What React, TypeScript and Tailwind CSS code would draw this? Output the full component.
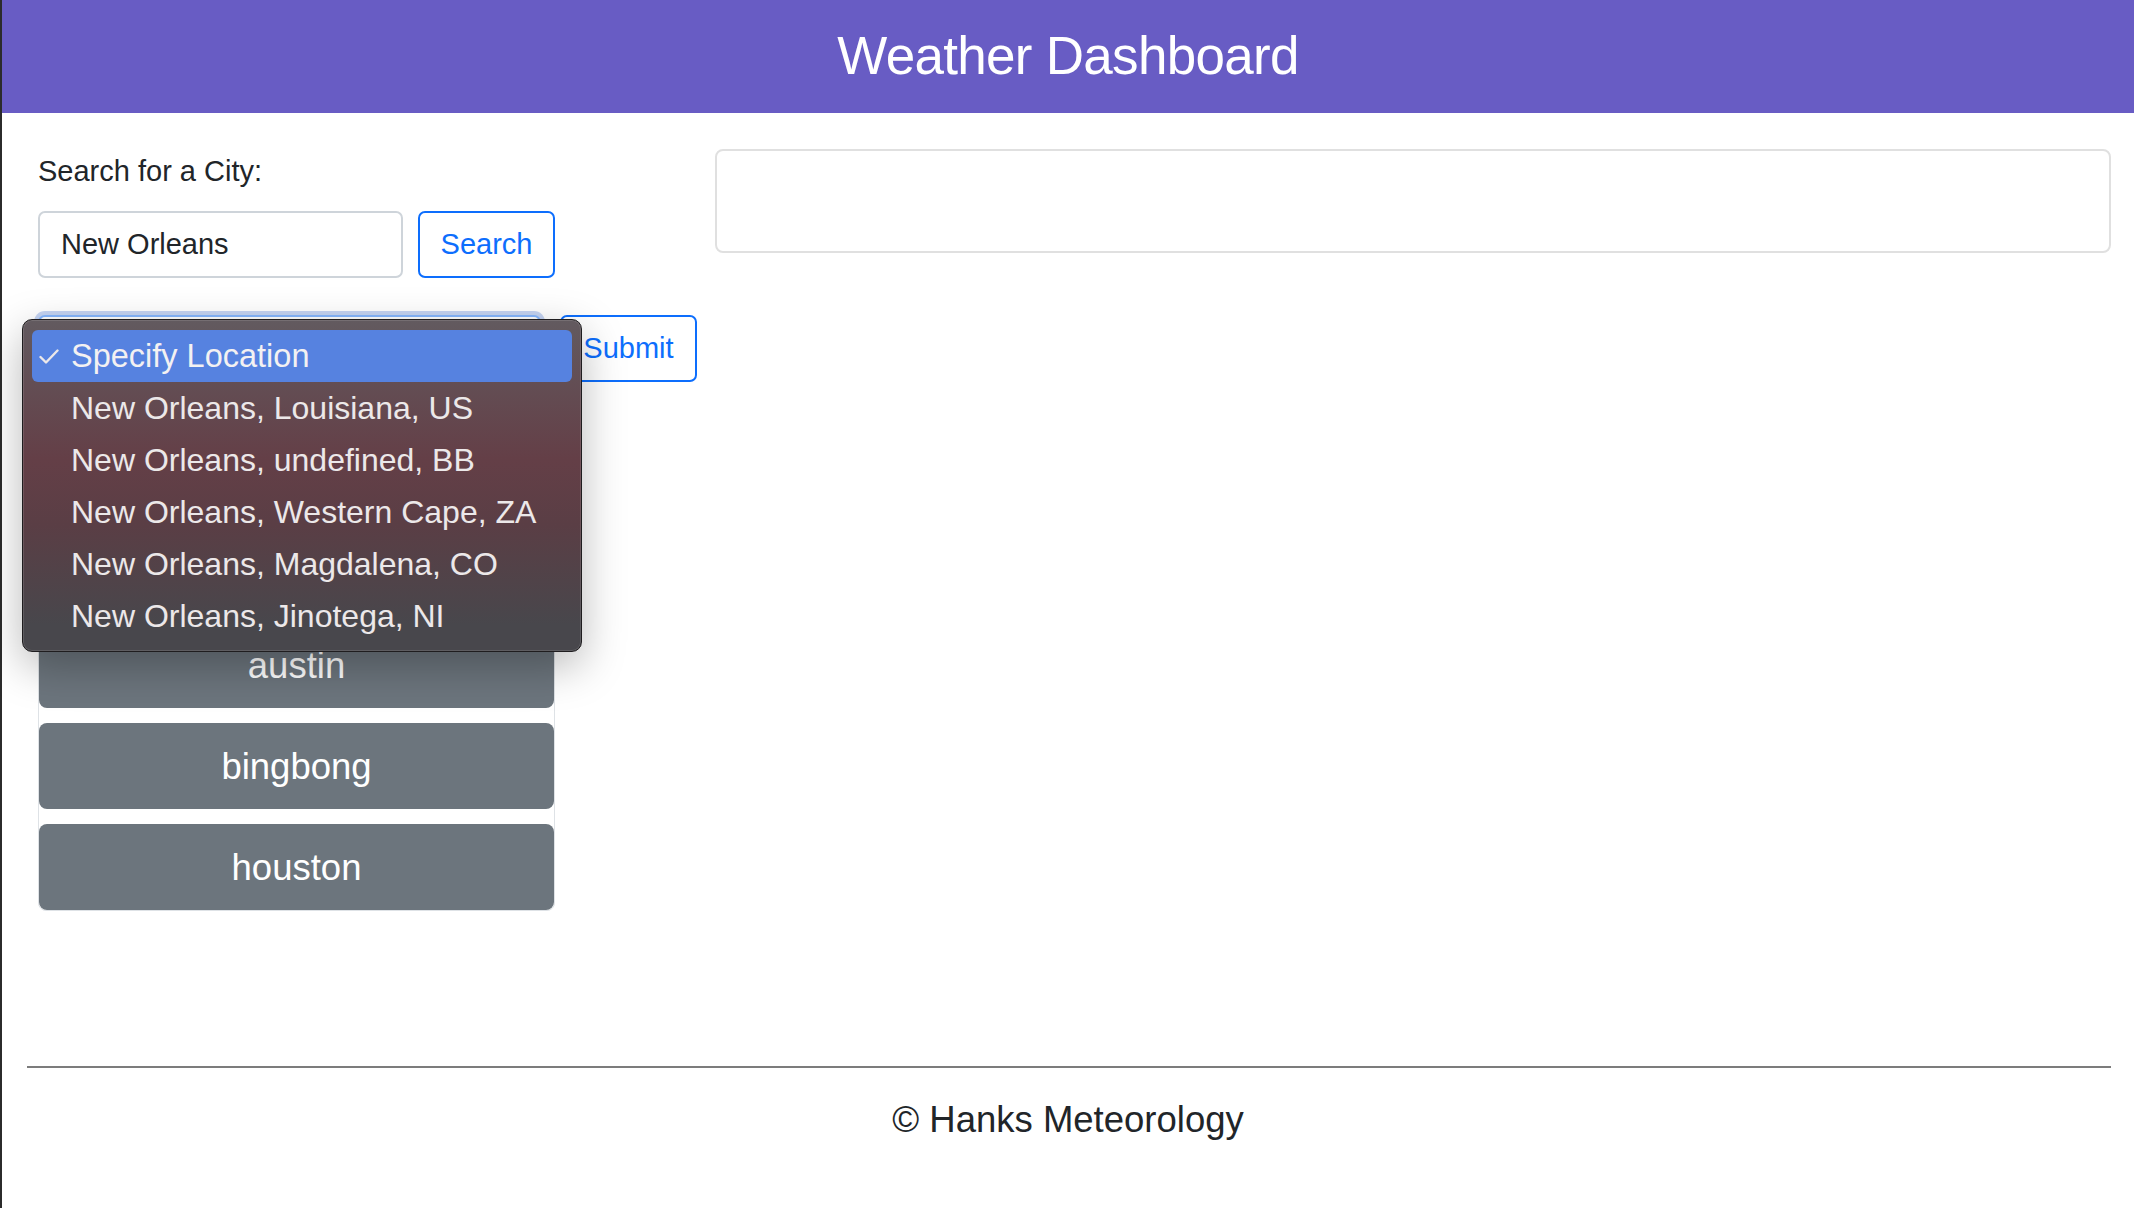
import React from 'react';

const locations = [
  'New Orleans, Louisiana, US',
  'New Orleans, undefined, BB',
  'New Orleans, Western Cape, ZA',
  'New Orleans, Magdalena, CO',
  'New Orleans, Jinotega, NI',
];

const savedCities = ['austin', 'bingbong', 'houston'];

const CheckMark: React.FC = () => (
  <svg width="20" height="15" viewBox="0 0 20 15" fill="none">
    <polyline points="1.5,8 7,13.5 18.5,1.5" stroke="#ece8e9" strokeWidth="2.4" strokeLinecap="round" strokeLinejoin="round" />
  </svg>
);

const LocationMenu: React.FC = () => (
  <div className="absolute left-[-16px] top-[4px] z-10 w-[560px] h-[333px] rounded-[10px] border border-[#1f1d1f] bg-[linear-gradient(180deg,#625a5f_0%,#643f47_42%,#5a3e45_62%,#48474c_92%)] px-[9px] pt-[10px] shadow-[0_14px_44px_rgba(0,0,0,0.28),inset_0_0_0_1px_rgba(255,255,255,0.12)]">
    <div className="flex items-center h-[52px] rounded-[6px] bg-[#5682e0] text-[32.5px] leading-[52px] text-[#f3f1f2]">
      <span className="w-[39px] pl-[7px] flex items-center">
        <CheckMark />
      </span>
      Specify Location
    </div>
    {locations.map((loc) => (
      <div key={loc} className="h-[52px] pl-[39px] text-[32px] leading-[52px] text-[#ece8e9] whitespace-nowrap">
        {loc}
      </div>
    ))}
  </div>
);

export default function App() {
  return (
    <div className="min-h-[1208px] bg-white border-l-2 border-[#2b2b2b] font-['Liberation_Sans',Arial,sans-serif] text-[#212529]">
      {/* Header */}
      <header className="h-[113px] bg-[#685cc4] flex items-center justify-center pb-[3px]">
        <h1 className="text-white text-[53px] leading-none tracking-[-0.7px]">Weather Dashboard</h1>
      </header>

      <main className="flex pt-[36px]">
        {/* Left column: search + saved cities */}
        <section className="w-[713px] shrink-0 pl-[36px]">
          <label className="block mt-[1px] mb-[19px] text-[29px] leading-[42px]">Search for a City:</label>
          <div className="flex gap-[15px]">
            <div className="w-[365px] h-[67px] border-2 border-[#ced4da] rounded-[7px] px-[21px] flex items-center text-[29px] text-[#212529]">
              New Orleans
            </div>
            <button className="w-[137px] h-[67px] border-2 border-[#0d6efd] rounded-[7px] text-[29px] text-[#0d6efd] bg-white">
              Search
            </button>
          </div>

          <div className="relative flex gap-[19px] mt-[37px]">
            <div className="w-[503px] h-[67px] rounded-[7px] border-2 border-[#86b7fe] bg-white ring-[4px] ring-[#c5d4f3]" />
            <button className="w-[137px] h-[67px] border-2 border-[#0d6efd] rounded-[7px] text-[29px] text-[#0d6efd] bg-white">
              Submit
            </button>
            <LocationMenu />
          </div>

          <ul className="mt-[239px] w-[517px] border border-[#dee2e6] rounded-[8px] flex flex-col gap-[15px]">
            {savedCities.map((city) => (
              <li key={city}>
                <button className="w-full h-[86px] pt-[3px] rounded-[8px] bg-[#6c757d] text-white text-[36.5px] leading-none flex items-center justify-center">
                  {city}
                </button>
              </li>
            ))}
          </ul>
        </section>

        {/* Right column: forecast panel */}
        <section className="flex-1 mr-[23px] h-[104px] border-2 border-[#e0e0e0] rounded-[8px]" />
      </main>

      {/* Footer */}
      <footer className="mt-[155px]">
        <hr className="ml-[25px] mr-[23px] border-0 h-[2px] bg-[#7c7c7c]" />
        <p className="mt-[31px] text-center text-[36.5px] leading-[42px] text-[#212529]">© Hanks Meteorology</p>
      </footer>
    </div>
  );
}
